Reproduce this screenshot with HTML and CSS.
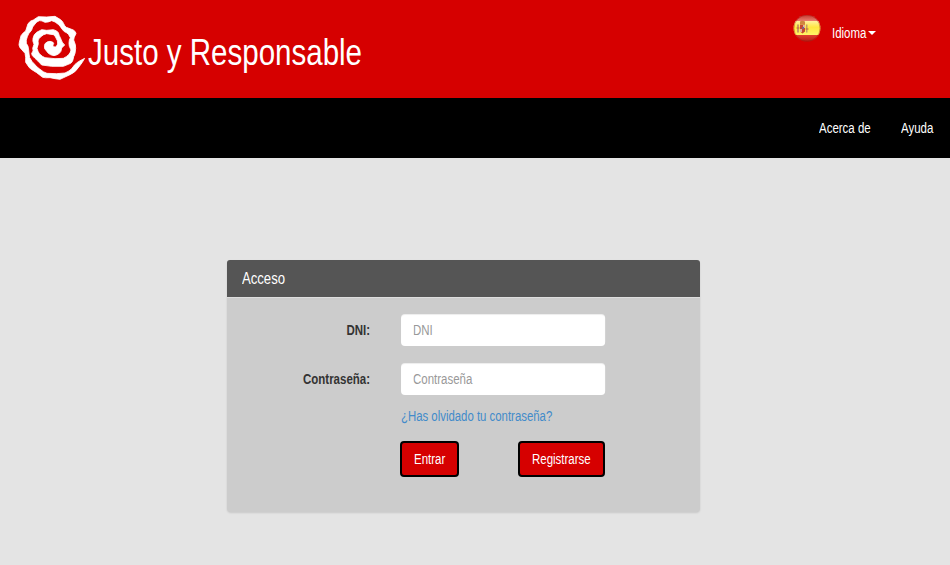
FILE: index.html
```html
<!DOCTYPE html>
<html lang="es">
<head>
<meta charset="utf-8">
<title>Justo y Responsable</title>
<link rel="stylesheet" href="styles.css">
</head>
<body>
<header class="banner">
  <div class="brand">
    <svg class="logo" viewBox="0 0 270 255" aria-hidden="true">
      <path fill="#fff" stroke="#fff" stroke-width="2.5" stroke-linejoin="round" d="M224 160Q218 172 205 188Q195 203 180 209L150 223L135 221L120 218Q105 219 98 217L80 203Q62 192 58 188L47 172Q48 155 45 145L30 128Q25 120 28 112L33 92Q40 82 47 78L54 56Q62 46 70 45L85 35L110 36L135 34L150 43Q160 50 161 56Q164 64 169 67L190 75Q198 80 198 86Q191 97 191 105Q198 120 197 130Q196 148 191 155Q189 171 182 175L160 184L125 184L95 180Q82 166 75 160Q64 151 65 145Q72 138 68 130L72 118Q67 108 69 100Q72 87 80 82L95 74L110 76L130 74Q142 77 145 83Q148 94 151 98Q156 114 164 120L155 129Q154 141 148 145Q142 150 132 152Q122 151 115 145L104 131Q102 121 105 116Q112 109 120 109Q131 111 131 115Q127 121 130 125L136 126Q142 122 143 117Q144 107 138 99Q136 92 130 89L110 86Q100 88 94 94Q85 101 84 108Q87 116 81 130Q84 141 88 146Q98 156 105 158L135 161L160 160Q170 155 176 149Q182 142 183 135Q176 123 177 115Q177 104 181 98Q176 87 171 84Q160 80 156 72Q151 64 146 59Q135 49 125 47Q115 52 105 52Q95 46 88 47Q79 50 75 57Q66 66 65 75Q54 87 52 95Q47 106 49 115Q56 123 56 135Q57 148 59 158Q66 171 74 178Q81 187 89 192Q100 202 111 205L140 206L165 204Q179 198 185 191Q195 176 205 170Z"/>
    </svg>
    <h1 class="brand-name condensed">Justo y Responsable</h1>
  </div>
  <div class="language">
    <svg class="flag" viewBox="0 0 28 28" aria-hidden="true">
      <defs>
        <clipPath id="disc"><circle cx="14" cy="13.2" r="13.4"/></clipPath>
        <linearGradient id="red" x2="0" y2="1"><stop stop-color="#c43a30"/><stop offset=".2" stop-color="#e8796c"/><stop offset=".75" stop-color="#dc3a2c"/><stop offset="1" stop-color="#a5160f"/></linearGradient>
        <linearGradient id="gold" x2="0" y2="1"><stop stop-color="#fff0a0"/><stop offset=".45" stop-color="#ffe640"/><stop offset="1" stop-color="#fff568"/></linearGradient>
      </defs>
      <g clip-path="url(#disc)">
        <path fill="url(#red)" d="M0 0h28v28H0z"/>
        <path fill="url(#gold)" d="M0 6h28v14H0z"/>
      </g>
      <path fill="#c79c62" d="M4 9.5h2v8H4zM13 9.5h1.5v8H13z"/>
      <path fill="#c54832" d="M7 9.5h5v7l-2.5 2L7 16.5z"/>
      <path fill="#cf853f" d="M7 6.5l2-1 3 1v3H7z"/>
      <path fill="#e0b49c" d="M10 10h2v3h-2zM7 14h2v3H7z"/>
      <path fill="#7c6483" d="M9 12h2v2H9z"/>
      <path stroke="#c8603f" d="M3.5 13h3M12.5 14h3"/>
      <circle cx="14" cy="13.2" r="13.1" fill="none" stroke="#a50b08" stroke-width=".7" opacity=".6"/>
    </svg>
    <a class="language-link"><span class="condensed">Idioma</span><span class="caret"></span></a>
  </div>
</header>
<nav class="menu"><a class="about condensed">Acerca de</a><a class="help condensed">Ayuda</a></nav>
<main class="panel">
  <h2 class="panel-heading"><span class="condensed">Acceso</span></h2>
  <form class="login">
    <label for="dni">DNI:</label>
    <input id="dni" type="text" placeholder="DNI">
    <label for="pass">Contraseña:</label>
    <input id="pass" type="password" placeholder="Contraseña">
    <a class="forgot condensed">¿Has olvidado tu contraseña?</a>
    <div class="actions">
      <button class="enter" type="button"><span class="condensed">Entrar</span></button>
      <button class="register" type="button"><span class="condensed">Registrarse</span></button>
    </div>
  </form>
</main>
</body>
</html>
```
FILE: styles.css
```css
* { box-sizing: border-box; }
body {
  margin: 0;
  min-height: 565px;
  background: #e4e4e4;
  color: #333;
  font: 14px/20px "Liberation Sans", Arial, sans-serif;
}
/* Narrow letterforms, anchored at the left edge */
.condensed {
  display: block;
  white-space: nowrap;
  transform: scaleX(.82);
  transform-origin: left;
}
.banner {
  height: 98px;
  padding: 5px 74px 0 10px;
  display: flex;
  justify-content: space-between;
  background: #d60000;
  color: #fff;
}
.brand { display: flex; }
.logo { width: 90px; height: 85px; }
.brand-name {
  margin: 28px 0 0 -12px;
  font-size: 36px;
  font-weight: 400;
  line-height: 40px;
}
.language { display: flex; align-items: flex-start; gap: 11px; padding-top: 10px; }
.flag { width: 28px; height: 28px; }
.language-link { display: flex; align-items: center; margin-top: 8px; }
.language-link .condensed { width: 34px; }
.caret {
  margin-left: 2px;
  border: 4px solid transparent;
  border-top-color: #fff;
  border-bottom: 0;
}
.menu {
  height: 60px;
  padding: 20px 17px 0 0;
  display: flex;
  justify-content: flex-end;
  gap: 30px;
  background: #000;
  color: #fff;
}
.about { width: 52px; }
.help { width: 32px; }
.panel {
  width: 473px;
  height: 252px;
  margin: 102px 0 0 227px;
  border-radius: 4px;
  background: #ccc;
  box-shadow: 0 1px 2px rgba(0, 0, 0, .12);
}
.panel-heading {
  height: 38px;
  margin: 0;
  padding: 10px 15px;
  border-bottom: 1px solid #ddd;
  border-radius: 3px 3px 0 0;
  background: #555;
  color: #fff;
  font-size: 16px;
  font-weight: 400;
  line-height: 18px;
}
.login {
  display: grid;
  grid-template-columns: 143px 204px;
  column-gap: 31px;
  padding-top: 16px;
}
.login label {
  height: 49px;
  padding-top: 6px;
  font-weight: 700;
  text-align: right;
  transform: scaleX(.82);
  transform-origin: right;
}
.login input {
  width: 248.8px;
  height: 32px;
  padding: 6px 14.6px;
  border: 0;
  border-radius: 4.9px / 4px;
  background: #fff;
  box-shadow: inset 0 1px 1px rgba(0, 0, 0, .075);
  font: inherit;
  transform: scaleX(.82);
  transform-origin: left;
}
.login input::placeholder { color: #999; opacity: 1; }
.forgot, .actions { grid-column: 2; }
.forgot { margin-top: -6px; color: #428bca; transform: scaleX(.813); }
.actions {
  display: flex;
  justify-content: space-between;
  margin: 15px 0 0 -1px;
}
.actions button {
  height: 36px;
  padding: 6px 12px;
  border: 2px solid #000;
  border-radius: 4px;
  background: #d60000;
  color: #fff;
  font: inherit;
  text-align: left;
}
.actions .enter { width: 59px; }
.actions .register { width: 87px; }
```
